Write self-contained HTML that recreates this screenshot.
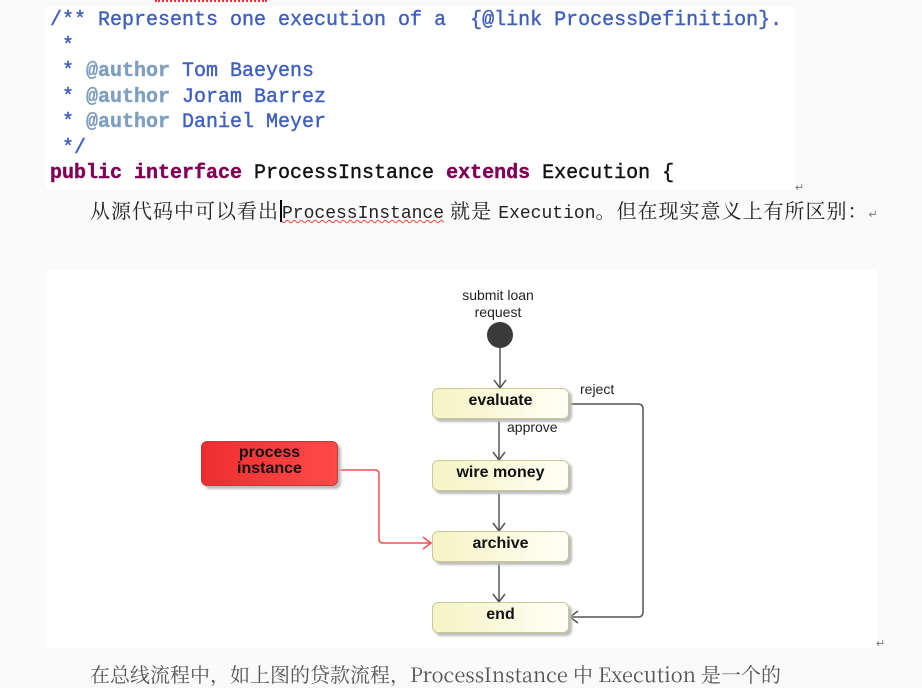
<!DOCTYPE html>
<html><head><meta charset="utf-8">
<style>
html,body{margin:0;padding:0;}
body{width:922px;height:669px;background:#fafafa;position:relative;overflow:hidden;}
.code{position:absolute;left:45px;top:7px;width:750px;height:183px;background:#fff;}
.ln{position:absolute;left:50px;font-family:"Liberation Mono",monospace;font-size:20px;white-space:pre;line-height:22px;-webkit-text-stroke:0.4px currentColor;}
.c{color:#3f5fbf;}
.a{color:#7f9fbf;font-weight:bold;}
.k{color:#7f0055;font-weight:bold;}
.t{color:#111;}
.zh{position:absolute;left:90px;top:197px;font-family:"Noto Serif CJK SC","Noto Sans CJK SC",serif;font-size:20px;letter-spacing:1px;color:#222;white-space:nowrap;line-height:26px;}
.mono{font-family:"Liberation Mono",monospace;font-size:18px;letter-spacing:0;}
.diag{position:absolute;left:46px;top:270px;width:831px;height:378px;background:#fff;}
.box{position:absolute;width:135px;height:29px;border:1.5px solid #c7c79a;border-radius:6px;background:linear-gradient(90deg,#f4f4c4,#fffff6);box-shadow:3px 3px 2px #bdbdbd;font-family:"Liberation Sans",sans-serif;font-weight:bold;font-size:16px;text-align:center;line-height:24px;color:#111;}
.lbl{position:absolute;font-family:"Liberation Sans",sans-serif;font-size:14px;color:#222;}
.ret{position:absolute;font-size:11px;color:#777;font-family:"Liberation Sans",sans-serif;}
</style></head><body>
<div style="position:absolute;left:155px;top:0;width:112px;height:1px;border-top:2px dotted #e33;"></div>
<div class="code"></div>
<div class="ln c" style="top:10px">/** Represents one execution of a  {@link ProcessDefinition}.</div>
<div class="ln c" style="top:36px"> *</div>
<div class="ln" style="top:61px"><span class="c"> * </span><span class="a">@author</span><span class="c"> Tom Baeyens</span></div>
<div class="ln" style="top:87px"><span class="c"> * </span><span class="a">@author</span><span class="c"> Joram Barrez</span></div>
<div class="ln" style="top:112px"><span class="c"> * </span><span class="a">@author</span><span class="c"> Daniel Meyer</span></div>
<div class="ln c" style="top:138px"> */</div>
<div class="ln" style="top:163px"><span class="k">public interface</span><span class="t"> ProcessInstance </span><span class="k">extends</span><span class="t"> Execution {</span></div>
<div class="ret" style="left:795px;top:181px">↵</div>
<div class="zh">从源代码中可以看出<span style="display:inline-block;width:2px;height:22px;background:#000;vertical-align:-4px;margin-left:1px"></span><span class="mono" style="text-decoration:underline wavy #e44;text-decoration-thickness:1px">ProcessInstance</span> 就是 <span class="mono">Execution</span>。但在现实意义上有所区别：<span style="font-size:11px;color:#777">↵</span></div>

<div class="diag"></div>
<svg style="position:absolute;left:0;top:0" width="922" height="669">
<circle cx="500" cy="335" r="13" fill="#3a3a3a"/>
<g stroke="#555" stroke-width="1.5" fill="none">
<line x1="500" y1="348" x2="500" y2="388"/><polyline points="494,380 500,388 506,380"/>
<line x1="499" y1="420" x2="499" y2="460"/><polyline points="493,452 499,460 505,452"/>
<line x1="499" y1="492" x2="499" y2="531"/><polyline points="493,523 499,531 505,523"/>
<line x1="499" y1="563" x2="499" y2="602"/><polyline points="493,594 499,602 505,594"/>
<path d="M569,404 H638 Q643,404 643,409 V612 Q643,617 638,617 H570"/><polyline points="578,611 570,617 578,623"/>
</g>
<g stroke="#f05050" stroke-width="1.5" fill="none">
<path d="M338,470 H375 Q379,470 379,474 V539 Q379,543 383,543 H431"/><polyline points="423,537 431,543 423,549"/>
</g>
</svg>
<div class="lbl" style="left:456px;top:287px;width:84px;text-align:center;line-height:17px">submit loan<br>request</div>
<div class="box" style="left:432px;top:388px">evaluate</div>
<div class="box" style="left:432px;top:460px">wire money</div>
<div class="box" style="left:432px;top:531px">archive</div>
<div class="box" style="left:432px;top:602px">end</div>
<div class="lbl" style="left:580px;top:381px">reject</div>
<div class="lbl" style="left:507px;top:419px">approve</div>
<div class="box" style="left:201px;top:441px;background:linear-gradient(90deg,#ee2e2e,#ff4a4a);border-color:#c03a3a;line-height:16px;padding-top:3px;box-sizing:content-box;height:40px">process<br>instance</div>
<div class="ret" style="left:876px;top:637px">↵</div>
<div style="position:absolute;left:90px;top:659px;font-family:'Noto Serif CJK SC',serif;font-size:20px;color:#555;white-space:nowrap">在总线流程中，如上图的贷款流程，ProcessInstance 中 Execution 是一个的</div>
</body></html>
